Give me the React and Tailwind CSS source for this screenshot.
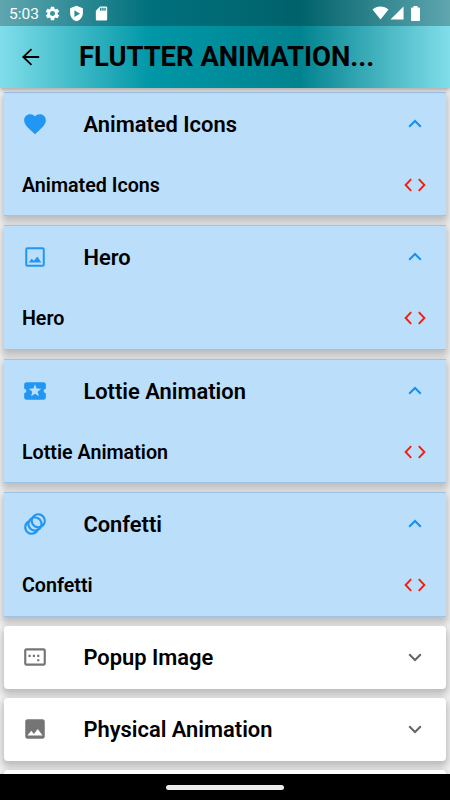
import { MdAnimation, MdFavorite, MdImage, MdImageAspectRatio, MdLocalPlay, MdSdCard, MdSettings } from "react-icons/md";

function FrameIcon({ className }) {
  return (
    <svg viewBox="0 0 24 24" fill="currentColor" className={className}>
      <path d="M19 3H5a2 2 0 0 0-2 2v14a2 2 0 0 0 2 2h14a2 2 0 0 0 2-2V5a2 2 0 0 0-2-2zm.2 16.200H4.800V4.800h14.400v14.400z" />
      <path d="M6.200 17l2.600-3.400 2.200 1.900 3.200-4 3.600 5.500z" />
    </svg>
  );
}

function BackIcon({ className }) {
  return (
    <svg viewBox="0 0 26 26" fill="none" stroke="currentColor" strokeWidth="1.800" className={className}>
      <path d="M22.200 13H6.500M14.500 5.200L6.300 13l8.200 7.800" />
    </svg>
  );
}

function CodeIcon({ className }) {
  return (
    <svg viewBox="0 0 26 26" fill="none" stroke="currentColor" strokeWidth="1.900" className={className}>
      <path d="M9.200 7.100L3.600 13l5.600 5.900M16.800 7.100l5.600 5.900-5.600 5.900" />
    </svg>
  );
}

function Chevron({ open }) {
  return (
    <svg
      viewBox="0 0 26 26"
      fill="none"
      stroke="currentColor"
      strokeWidth="2"
      className={open ? "size-[26px] text-[#1490f5]" : "size-[26px] text-[#666666]"}
    >
      <path d={open ? "M7.200 15.700L13 10l5.800 5.700" : "M7.200 10.300L13 16l5.800-5.700"} />
    </svg>
  );
}

const panels = [
  { title: "Animated Icons", icon: MdFavorite, open: true },
  { title: "Hero", icon: FrameIcon, open: true },
  { title: "Lottie Animation", icon: MdLocalPlay, open: true },
  { title: "Confetti", icon: MdAnimation, open: true },
  { title: "Popup Image", icon: MdImageAspectRatio, open: false },
  { title: "Physical Animation", icon: MdImage, open: false },
];

function StatusBar() {
  return (
    <div className="flex h-[26px] shrink-0 items-center bg-black/25 pl-[9px] text-white">
      <span className="w-[35px] pt-[3px] text-[15.500px] leading-none">5:03</span>
      <MdSettings className="size-[17px]" />
      <svg viewBox="0 0 24 24" fill="currentColor" className="ml-[7px] size-[17px]">
        <path fillRule="evenodd" d="M12 1L3 4.500v6.700c0 5.500 3.800 10.300 9 11.800 5.200-1.500 9-6.300 9-11.800V4.500L12 1zM9 7.500l8 4.700-8 4.700z" />
      </svg>
      <MdSdCard className="ml-[8px] size-[17px]" />
      <svg viewBox="0 0 17 14" fill="currentColor" className="ml-auto h-[14px] w-[17px]">
        <path d="M.5 3.500C5 -.5 12 -.5 16.500 3.500L8.500 13.500z" />
      </svg>
      <svg viewBox="0 0 15 14" fill="currentColor" className="ml-px h-[14px] w-[14px]">
        <path d="M14.500 0v14H.5z" />
      </svg>
      <svg viewBox="0 0 9 15" fill="currentColor" className="mr-[30px] ml-[7px] h-[15px] w-[9px]">
        <path d="M2.500 0h4v1.500H8q1 0 1 1V14q0 1-1 1H1q-1 0-1-1V2.500q0-1 1-1h1.500z" />
      </svg>
    </div>
  );
}

function Panel({ title, icon: Icon, open }) {
  return (
    <section
      className={
        open
          ? "h-[124.500px] shrink-0 border-y border-[#9fc3e2] bg-[#bbdefb] shadow-[0_4px_7px_2px_rgba(0,0,0,0.22)]"
          : "h-[63px] shrink-0 rounded-[4px] bg-white shadow-[0_4px_7px_2px_rgba(0,0,0,0.22)]"
      }
    >
      <div className="flex h-[62px] items-center pr-[18px] pl-[17.500px]">
        <Icon className={open ? "size-[26px] text-[#2196f3]" : "size-[26px] text-[#757575]"} />
        <h2 className="ml-[35.500px] flex-1 pt-[2px] text-[21.900px] leading-none font-semibold">{title}</h2>
        <Chevron open={open} />
      </div>
      {open && (
        <div className="flex h-[60px] items-center justify-between pr-[18px] pl-[17.500px]">
          <p className="pt-[2px] text-[19.700px] leading-none font-semibold">{title}</p>
          <CodeIcon className="size-[26px] text-[#f61b0d]" />
        </div>
      )}
    </section>
  );
}

function App() {
  return (
    <main className="flex h-[800px] w-[450px] flex-col overflow-hidden bg-[#f2f2f2] font-['Roboto',sans-serif] text-black">
      <header className="relative z-10 h-[87.500px] shrink-0 bg-[linear-gradient(90deg,#80deea_0%,#0097a7_33.3%,#00838f_66.6%,#80deea_100%)] shadow-[0_2px_4px_rgba(0,0,0,0.3)]">
        <StatusBar />
        <div className="flex h-[61px] items-center pl-[17px]">
          <BackIcon className="size-[26px]" />
          <h1 className="ml-[36px] pt-[3px] text-[27.400px] leading-none font-bold">FLUTTER ANIMATION...</h1>
        </div>
      </header>
      <div className="flex min-h-0 flex-1 flex-col gap-[9px] overflow-hidden px-[4.400px] pt-[4.200px]">
        {panels.map((panel) => (
          <Panel key={panel.title} {...panel} />
        ))}
        <div className="h-[64px] shrink-0 rounded-[4px] bg-white shadow-[0_4px_7px_2px_rgba(0,0,0,0.22)]" />
      </div>
      <footer className="relative z-10 flex h-[26px] shrink-0 items-center justify-center bg-black">
        <span className="h-[5px] w-[118px] rounded-full bg-[#ececec]" />
      </footer>
    </main>
  );
}

export default App;
